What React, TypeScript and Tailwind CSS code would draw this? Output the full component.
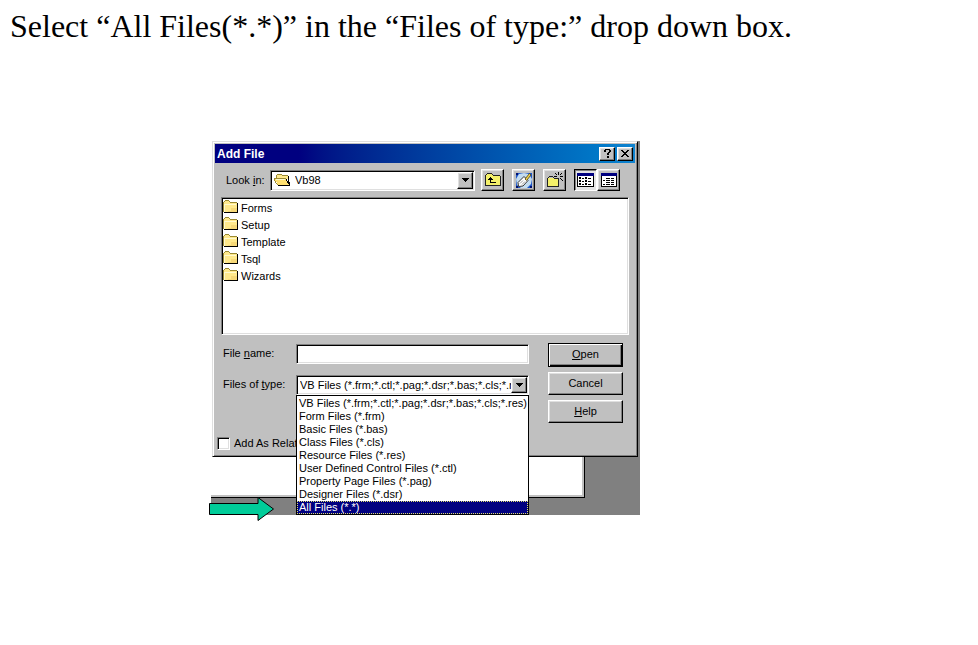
import type { ReactNode } from "react";

const RAISED =
  "border border-t-white border-l-white border-r-black border-b-black shadow-[inset_-1px_-1px_0_#808080,inset_1px_1px_0_#dfdfdf] bg-[#c0c0c0]";
const SUNKEN =
  "border border-t-[#808080] border-l-[#808080] border-r-white border-b-white shadow-[inset_1px_1px_0_#000,inset_-1px_-1px_0_#dfdfdf] bg-white";

const folders = ["Forms", "Setup", "Template", "Tsql", "Wizards"];

const fileTypes = [
  "VB Files (*.frm;*.ctl;*.pag;*.dsr;*.bas;*.cls;*.res)",
  "Form Files (*.frm)",
  "Basic Files (*.bas)",
  "Class Files (*.cls)",
  "Resource Files (*.res)",
  "User Defined Control Files (*.ctl)",
  "Property Page Files (*.pag)",
  "Designer Files (*.dsr)",
  "All Files (*.*)",
];

function FolderIcon() {
  return (
    <svg width="16" height="15" viewBox="0 0 16 15" shapeRendering="crispEdges" aria-hidden="true">
      <path d="M1 2h1v-1h5v1h1v1h6v9H1z" fill="#ffe98c" />
      <path d="M1 4h12v1H2v7H1z" fill="#fffad0" />
      <path d="M8 8h6v4H5v-1h3z" fill="#f6d878" />
      <path d="M0 2h1v10H0zM1 1h1v1H1zM2 0h4v1H2zM6 1h1v1H6zM7 2h7v1H7zM1 12h13v1H1z" fill="#9a8a34" />
      <path d="M14 3h1v10h-1zM1 12h14v1H1z" fill="#000" />
    </svg>
  );
}

function OpenFolderIcon() {
  return (
    <svg width="17" height="14" viewBox="0 0 17 14" shapeRendering="crispEdges" aria-hidden="true">
      <path d="M3 2h1V1h4v1h1v1h5v3H3z" fill="#ffe98c" />
      <path d="M1 6h11v1h1v2h1v2h1v1H4v-1H3V9H2V8H1z" fill="#ffe070" />
      <path d="M2 6h9v1H2z" fill="#fffad0" />
      <path d="M3 1h5v1H3zM2 2h1v4H2zM8 2h6v1H8zM0 5h12v1H0zM0 6h1v2H0zM1 8h1v2H1zM2 10h1v1H2zM3 11h1v1H3z" fill="#9a8a34" />
      <path d="M14 3h1v6h-1zM12 6h1v2h-1zM13 8h1v2h-1zM14 9h2v4h-1v-2h-1zM4 12h12v1H4z" fill="#000" />
    </svg>
  );
}

function UpIcon() {
  return (
    <svg width="16" height="14" viewBox="0 0 16 14" shapeRendering="crispEdges" aria-hidden="true">
      <path d="M1 2h1v-1h5v1h1v1h7v10H1z" fill="#f4f06a" />
      <path d="M2 0h5v1H2zM1 1h1v1H1zM7 1h1v1H7zM8 2h7v1H8zM0 2h1v11H0zM15 3h1v10h-1zM0 12h16v1H0z" fill="#222" />
      <path d="M5 4h1v1H5zM4 5h3v1H4zM3 6h5v1H3zM5 7h1v3H5zM5 9h6v1H5z" fill="#000" />
    </svg>
  );
}

function DesktopIcon() {
  return (
    <svg width="18" height="17" viewBox="0 0 18 17" aria-hidden="true">
      <path d="M1 1h16v15H1z" fill="#1c56c8" />
      <path d="M1 1h2v2H1zM15 14h2v2h-2zM1 14h2v2H1z" fill="#001070" />
      <path d="M9 1l5 1 3 5-1 5-4 4H6l-4-3-1-6 3-5z" fill="#c3dcf0" />
      <path d="M3 10.500L9 4.500l4 4-5 5.500-4.500.5z" fill="#fff" stroke="#333" />
      <path d="M10 7L14.500 1.500l1.500 1.500-4.500 5.500z" fill="#f3d34c" stroke="#4a3d10" strokeWidth=".8" />
      <path d="M5 11.500l3-3M7 12.500l3-3" stroke="#999" />
    </svg>
  );
}

function NewFolderIcon() {
  return (
    <svg width="18" height="16" viewBox="0 0 18 16" shapeRendering="crispEdges" aria-hidden="true">
      <path d="M2 6h10v8H2z" fill="#f4f06a" />
      <path d="M1 6h1v9H1zM2 5h1v1H2zM3 4h4v1H3zM7 5h1v1H7zM8 6h5v1H8zM12 6h1v9h-1zM1 14h12v1H1z" fill="#222" />
      <path d="M12 0h1v3h-1zM9 1h1v1H9zM10 2h1v1h-1zM15 1h1v1h-1zM14 2h1v1h-1zM8 4h3v1H8zM14 4h3v1h-3zM14 6h1v1h-1zM15 7h1v1h-1zM16 8h1v1h-1z" fill="#000" />
    </svg>
  );
}

function ListIcon() {
  return (
    <svg width="17" height="14" viewBox="0 0 17 14" shapeRendering="crispEdges" aria-hidden="true">
      <path d="M0 0h17v14H0z" fill="#000" />
      <path d="M0 0h17v3H0z" fill="#000080" />
      <path d="M1 3h15v10H1z" fill="#fff" />
      <path d="M2 4h2v2H2zM5 5h2v1H5zM8 4h2v2H8zM11 5h3v1h-3zM2 7h2v2H2zM5 8h2v1H5zM8 7h2v2H8zM11 8h3v1h-3zM2 10h2v2H2zM5 11h2v1H5zM8 10h2v2H8zM11 11h3v1h-3z" fill="#000" />
    </svg>
  );
}

function DetailsIcon() {
  return (
    <svg width="16" height="14" viewBox="0 0 16 14" shapeRendering="crispEdges" aria-hidden="true">
      <path d="M0 0h16v14H0z" fill="#000" />
      <path d="M0 0h16v3H0z" fill="#000080" />
      <path d="M1 3h14v10H1z" fill="#fff" />
      <path d="M5 5h4v1H5zM10 5h3v1h-3zM2 7h2v1H2zM5 7h4v1H5zM10 7h3v1h-3zM5 9h4v1H5zM10 9h3v1h-3zM2 11h2v1H2zM5 11h4v1H5zM10 11h3v1h-3z" fill="#000" />
    </svg>
  );
}

function ComboArrow() {
  return (
    <span
      aria-hidden="true"
      className={`pointer-events-none absolute inset-y-[2px] right-[2px] flex w-4 items-center justify-center ${RAISED}`}
    >
      <svg width="7" height="4" viewBox="0 0 7 4" shapeRendering="crispEdges">
        <path d="M0 0h7v1H0zM1 1h5v1H1zM2 2h3v1H2zM3 3h1v1H3z" />
      </svg>
    </span>
  );
}

function ToolButton({ label, children }: { label: string; children: ReactNode }) {
  return (
    <button type="button" aria-label={label} className={`flex h-[22px] w-[23px] items-center justify-center ${RAISED}`}>
      {children}
    </button>
  );
}

function CaptionButton({ label, children }: { label: string; children: ReactNode }) {
  return (
    <button type="button" aria-label={label} className={`flex h-[14px] w-4 items-center justify-center ${RAISED}`}>
      {children}
    </button>
  );
}

function TitleBar() {
  return (
    <header className="mx-px flex h-[19px] items-center gap-[2px] bg-linear-to-r from-[#000080] from-20% to-[#1084d0] px-[2px] text-white">
      <h2 className="flex-1 text-[12px] leading-4 font-bold">Add File</h2>
      <CaptionButton label="What's this?">
        <svg width="7" height="9" viewBox="0 0 7 9" shapeRendering="crispEdges">
          <path d="M1 0h5v1H1zM0 1h2v2H0zM5 1h2v2H5zM4 3h2v1H4zM3 4h2v2H3zM3 7h2v2H3z" />
        </svg>
      </CaptionButton>
      <CaptionButton label="Close">
        <svg width="8" height="7" viewBox="0 0 8 7" shapeRendering="crispEdges">
          <path d="M0 0h2v1H0zM6 0h2v1H6zM1 1h2v1H1zM5 1h2v1H5zM2 2h4v1H2zM3 3h2v1H3zM2 4h4v1H2zM1 5h2v1H1zM5 5h2v1H5zM0 6h2v1H0zM6 6h2v1H6z" />
        </svg>
      </CaptionButton>
    </header>
  );
}

function LookInRow() {
  return (
    <div className="mt-[6px] flex h-[22px] items-center pr-4 pl-3">
      <label htmlFor="look-in" className="w-[44px]">
        Look <u>i</u>n:
      </label>
      <div className="relative flex-1">
        <select id="look-in" className={`block h-[21px] w-full appearance-none pr-5 pl-[24px] ${SUNKEN}`}>
          <option>Vb98</option>
        </select>
        <span className="pointer-events-none absolute top-[3px] left-1">
          <OpenFolderIcon />
        </span>
        <ComboArrow />
      </div>
      <div className="ml-[6px] flex gap-2">
        <ToolButton label="Up one level">
          <UpIcon />
        </ToolButton>
        <ToolButton label="View desktop">
          <DesktopIcon />
        </ToolButton>
        <ToolButton label="Create new folder">
          <NewFolderIcon />
        </ToolButton>
        <div className="flex">
          <button
            type="button"
            aria-label="List"
            aria-pressed="true"
            className="flex h-[22px] w-[23px] items-center justify-center border border-t-black border-r-white border-b-white border-l-black bg-[#e4e4e4] shadow-[inset_1px_1px_0_#808080]"
          >
            <ListIcon />
          </button>
          <ToolButton label="Details">
            <DetailsIcon />
          </ToolButton>
        </div>
      </div>
    </div>
  );
}

function FileFields() {
  return (
    <div className="flex flex-1 flex-col pt-px">
      <div className="flex items-center">
        <label htmlFor="file-name" className="w-[73px] pb-[2px]">
          File <u>n</u>ame:
        </label>
        <input id="file-name" type="text" className={`h-5 min-w-0 flex-1 px-1 outline-none ${SUNKEN}`} />
      </div>
      <div className="mt-[11px] flex items-center">
        <label htmlFor="file-type" className="w-[73px] pb-[2px]">
          Files of <u>t</u>ype:
        </label>
        <div className="relative min-w-0 flex-1">
          <select id="file-type" className={`block h-5 w-full appearance-none overflow-hidden pr-[17px] pl-[3px] ${SUNKEN}`}>
            {fileTypes.map((type) => (
              <option key={type}>{type}</option>
            ))}
          </select>
          <ComboArrow />
          <ul
            role="listbox"
            aria-label="Files of type"
            className="absolute top-full left-0 z-10 w-full border border-black bg-white pt-px leading-[13px] whitespace-nowrap"
          >
            {fileTypes.map((type, i) => {
              const active = i === fileTypes.length - 1;
              return (
                <li
                  key={type}
                  role="option"
                  aria-selected={active}
                  className={
                    active
                      ? "h-[13px] bg-[#000080] pl-[2px] text-white outline-1 -outline-offset-1 outline-dotted outline-[#e0e070]"
                      : "h-[13px] pl-[2px]"
                  }
                >
                  {type}
                </li>
              );
            })}
          </ul>
        </div>
      </div>
    </div>
  );
}

function AddFileDialog() {
  return (
    <section
      role="dialog"
      aria-label="Add File"
      className="relative mt-px mr-[2px] ml-px border border-t-[#dfdfdf] border-r-black border-b-black border-l-[#dfdfdf] bg-[#c0c0c0] px-px pt-[2px] pb-[6px] shadow-[inset_1px_1px_0_#fff,inset_-1px_-1px_0_#808080]"
    >
      <TitleBar />
      <LookInRow />
      <ul className={`mt-[6px] mr-[7px] ml-[7px] h-[138px] pt-px pl-px ${SUNKEN}`}>
        {folders.map((name) => (
          <li key={name} className="flex h-[17px] items-center gap-[2px]">
            <FolderIcon />
            <span>{name}</span>
          </li>
        ))}
      </ul>
      <div className="mt-2 flex gap-[19px] pr-[13px] pl-[9px]">
        <FileFields />
        <div className="flex w-[75px] flex-col gap-[5px]">
          <button type="button" className="h-6 border border-black bg-[#c0c0c0] pb-[2px] shadow-[inset_1px_1px_0_#fff,inset_-1px_-1px_0_#000,inset_-2px_-2px_0_#808080]">
            <u>O</u>pen
          </button>
          <button type="button" className={`h-[23px] pb-[2px] ${RAISED}`}>
            Cancel
          </button>
          <button type="button" className={`h-[23px] pb-[2px] ${RAISED}`}>
            <u>H</u>elp
          </button>
        </div>
      </div>
      <label className="mt-[13px] ml-[3px] flex items-center gap-1">
        <input type="checkbox" className={`size-[13px] appearance-none ${SUNKEN}`} />
        <span>Add As Relat</span>
      </label>
    </section>
  );
}

export default function App() {
  return (
    <main className="min-h-screen bg-white text-black">
      <h1 className="px-[10px] pt-[7px] font-['Liberation_Serif',serif] text-[32px] leading-[38px]">
        Select “All Files(*.*)” in the “Files of type:” drop down box.
      </h1>
      <div className="relative mt-24 ml-[211px] h-[374px] w-[429px] bg-[#808080] font-['Liberation_Sans',Arial,sans-serif] text-[11px] leading-[14px]">
        <div className="absolute top-0 left-0 h-[357px] w-[374px] border-r border-b border-black bg-white shadow-[inset_-2px_-2px_0_#c0c0c0]" />
        <AddFileDialog />
        <svg className="absolute top-[355px] -left-[2px]" width="66" height="26" viewBox="0 0 66 26" role="img" aria-label="Arrow pointing at All Files">
          <path d="M.5 7.500H49V1.500L64.500 13 49 24.500V18.500H.5z" fill="#00cc99" stroke="#000" />
        </svg>
      </div>
    </main>
  );
}
